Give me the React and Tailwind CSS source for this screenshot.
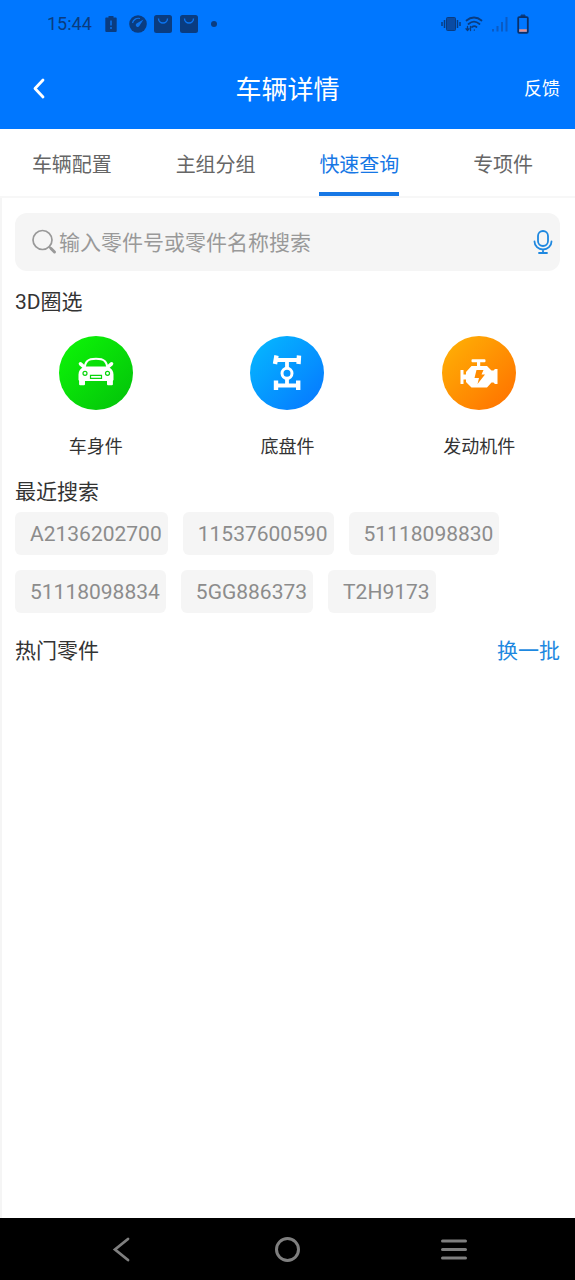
import { useState } from "react";

const tabs = ["车辆配置", "主组分组", "快速查询", "专项件"];

const recentSearches = [
	"A2136202700",
	"11537600590",
	"51118098830",
	"51118098834",
	"5GG886373",
	"T2H9173",
];

function BagIcon() {
	return (
		<svg viewBox="0 0 18 18" className="size-[18px]" aria-hidden="true">
			<rect width="18" height="18" rx="2.5" fill="#0a3c80" />
			<path d="M4.500 3.500a4.500 4.500 0 0 0 9 0" fill="none" stroke="#0b74f0" strokeWidth="1.400" />
		</svg>
	);
}

function StatusBar() {
	return (
		<div className="flex h-12 items-center justify-between pr-[46px] pl-[47px] text-[#0a3c80]">
			<div className="flex items-center">
				<span className="w-[58px] text-lg">15:44</span>
				<svg viewBox="0 0 12 18" className="mr-3 h-[18px] w-3" aria-hidden="true">
					<path d="M3.500 1h5v1.500H11a.7.7 0 0 1 .7.700V16a1 1 0 0 1-1 1H1.300a1 1 0 0 1-1-1V3.200a.7.7 0 0 1 .7-.7h2.500z" fill="#0a3c80" />
					<path d="M6 5.500v5M6 12v2" stroke="#0b74f0" strokeWidth="1.500" />
				</svg>
				<svg viewBox="0 0 18 18" className="mr-[7px] size-[18px]" aria-hidden="true">
					<circle cx="9" cy="9" r="8.800" fill="#0a3c80" />
					<path d="M3.500 8a6 6 0 0 1 7.500-4.500" fill="none" stroke="#0b74f0" strokeWidth="1.200" />
					<path d="M14.500 4.500 10.300 11a1.900 1.900 0 1 1-2.800-2.500z" fill="#0b74f0" />
				</svg>
				<div className="flex gap-2">
					<BagIcon />
					<BagIcon />
				</div>
				<span className="ml-[13px] size-1.5 rounded-full bg-[#0a3c80]" />
			</div>
			<div className="flex items-center">
				<svg viewBox="0 0 20 16" className="mr-1 h-4 w-5" aria-hidden="true">
					<rect x="5.500" y="1.500" width="9" height="13" rx="1" fill="#0a4ba3" stroke="#0a3c80" />
					<path d="M3.500 4v8M16.500 4v8M1 6v4M19 6v4" stroke="#0a3c80" strokeWidth="1.500" />
				</svg>
				<svg viewBox="0 0 18 16" className="mr-2 h-4 w-[18px]" aria-hidden="true" fill="none" stroke="#0a3c80" strokeWidth="1.800" strokeLinecap="round">
					<path d="M1.500 4.500c4.500-4 10.500-4 15 0M3.500 8c3.500-3 7.500-3 11 0M7 11c1.800-1.200 3-1.200 4.500 0" />
					<path d="M9.300 14v.2M2.500 10.500v4M1 12.800l1.500 1.700L4 12.800M5.500 14.500v-4" strokeWidth="1.300" />
				</svg>
				<svg viewBox="0 0 18 16" className="mr-2 h-4 w-[18px]" aria-hidden="true">
					<path d="M2 15.500V13M6.500 15.500V10M11 15.500V6M15.500 15.500V1" stroke="#0a5bc4" strokeWidth="2" />
				</svg>
				<svg viewBox="0 0 12 20" className="h-5 w-3" aria-hidden="true">
					<path d="M4 3V1h4v2" fill="#0a3c80" stroke="#0a3c80" />
					<rect x="1.200" y="3.200" width="9.600" height="15.600" rx="1" fill="none" stroke="#0a3069" strokeWidth="1.800" />
					<path d="M2.200 16.500h7.600" stroke="#e8908a" strokeWidth="2.500" />
				</svg>
			</div>
		</div>
	);
}

function CarIcon() {
	return (
		<svg viewBox="0 0 74 74" className="size-[74px]" aria-hidden="true">
			<defs>
				<linearGradient id="green" x1="0" y1="0" x2="1" y2="1">
					<stop offset="0.1" stopColor="#0cf207" />
					<stop offset="0.9" stopColor="#04c60a" />
				</linearGradient>
			</defs>
			<circle cx="37" cy="37" r="37" fill="url(#green)" />
			<path d="M25.500 32c.8-6.500 3-9.300 11.500-9.300S47.700 25.500 48.500 32" fill="none" stroke="#fff" strokeWidth="2" />
			<path d="M25.500 30.500h23c4 1.500 6 4.500 6 8v5.500l-.6.800v3.400q0 1-1 1h-3.900q-1 0-1-1V45H26v3.200q0 1-1 1h-3.900q-1 0-1-1v-3.400l-.6-.8v-5.500c0-3.500 2-6.500 6-8z" fill="#fff" />
			<path d="M21.500 27.800 24.500 30.500M52.500 27.800 49.500 30.500" stroke="#fff" strokeWidth="3.600" strokeLinecap="round" />
			<g fill="#fff" stroke="#09d60c" strokeWidth="1.200">
				<circle cx="26" cy="37.300" r="2" />
				<circle cx="48.500" cy="37.300" r="2" />
				<path d="M31.500 39.300h11v3h-11z" />
			</g>
		</svg>
	);
}

function ChassisIcon() {
	return (
		<svg viewBox="0 0 74 74" className="size-[74px]" aria-hidden="true">
			<defs>
				<linearGradient id="blue" x1="0" y1="0" x2="1" y2="1">
					<stop offset="0.1" stopColor="#05b4ff" />
					<stop offset="0.9" stopColor="#067cff" />
				</linearGradient>
			</defs>
			<circle cx="37" cy="37" r="37" fill="url(#blue)" />
			<g fill="none" stroke="#fff">
				<path d="M27 24h20M27 49.500h20M37 24v8M37 42v7.500" strokeWidth="3.800" />
				<circle cx="37" cy="37.300" r="5" strokeWidth="3" />
				<path d="M26.500 19.500 25 28M49 19.500 48.500 28" strokeWidth="4.400" />
				<path d="M26 44.500V54M48.200 44.500V54" strokeWidth="4.400" />
			</g>
		</svg>
	);
}

function EngineIcon() {
	return (
		<svg viewBox="0 0 74 74" className="size-[74px]" aria-hidden="true">
			<defs>
				<linearGradient id="orange" x1="0" y1="0" x2="1" y2="1">
					<stop offset="0.1" stopColor="#ffad05" />
					<stop offset="0.9" stopColor="#ff7500" />
				</linearGradient>
			</defs>
			<circle cx="37" cy="37" r="37" fill="url(#orange)" />
			<g fill="#fff">
				<path d="M30.500 23.200h12q1 0 1 1v1q0 1-1 1h-4.300V30H45l4.500 4.500h2L53 33h2.500v15H53l-1.500-1.500h-2L45 51.500H29.500L24 46v-10l5.500-6H35v-3.800h-4.500q-1 0-1-1v-1q0-1 1-1z" />
				<path d="M18.500 34h3v4.500h4v5h-4V48h-3z" />
			</g>
			<path d="M34.500 34h7l-2 4.500h3.500L35.500 48l1.500-6h-4.500z" fill="#ff8b00" />
		</svg>
	);
}

const categories = [
	{ name: "车身件", Icon: CarIcon },
	{ name: "底盘件", Icon: ChassisIcon },
	{ name: "发动机件", Icon: EngineIcon },
];

export default function App() {
	const [activeTab, setActiveTab] = useState("快速查询");
	const [keyword, setKeyword] = useState("");

	return (
		<div className="flex min-h-screen flex-col bg-white font-[Roboto,'Noto_Sans_CJK_SC',sans-serif] text-[#333]">
			<header className="bg-[#0077ff]">
				<StatusBar />
				<div className="grid h-[81px] grid-cols-3 items-center px-[15px] text-white">
					<button type="button" aria-label="返回" className="flex w-12 justify-center">
						<svg viewBox="0 0 14 22" className="h-[22px] w-3.5" aria-hidden="true">
							<path d="M11 2 3 10.500l8 8.500" fill="none" stroke="currentColor" strokeWidth="2.800" strokeLinecap="round" strokeLinejoin="round" />
						</svg>
					</button>
					<h1 className="pt-1 text-center text-[26px]">车辆详情</h1>
					<button type="button" className="justify-self-end text-lg">
						反馈
					</button>
				</div>
			</header>

			<nav className="grid h-[69px] grid-cols-4 border-b-2 border-[#f7f7f7]">
				{tabs.map((tab) => (
					<button
						key={tab}
						type="button"
						onClick={() => setActiveTab(tab)}
						className={`justify-self-center border-b-4 pt-2 text-xl ${
							activeTab === tab
								? "border-[#1677e5] text-[#1677e5]"
								: "border-transparent text-[#666]"
						}`}
					>
						{tab}
					</button>
				))}
			</nav>

			<main className="flex-1 border-l-2 border-[#f5f5f5] pt-[15px] pr-[15px] pl-[13px]">
				<div className="flex h-[58px] items-center rounded-xl bg-[#f5f5f5] pr-[5px] pl-4">
					<svg viewBox="0 0 28 28" className="size-7" aria-hidden="true" fill="none" stroke="#999">
						<circle cx="11.500" cy="12" r="9.500" strokeWidth="1.700" />
						<path d="m18 18.500 2 2" strokeWidth="2" />
						<path d="m20 20.500 3.500 3.500" strokeWidth="3" strokeLinecap="round" />
					</svg>
					<input
						type="text"
						aria-label="搜索零件"
						placeholder="输入零件号或零件名称搜索"
						value={keyword}
						onChange={(e) => setKeyword(e.target.value)}
						className="min-w-0 flex-1 bg-transparent pt-1 text-[21px] outline-none placeholder:text-[#999]"
					/>
					<button type="button" aria-label="语音搜索">
						<svg viewBox="0 0 24 26" className="h-[26px] w-6" aria-hidden="true" fill="none" stroke="#1e88e0" strokeWidth="1.800" strokeLinecap="round">
							<rect x="7" y="2" width="10" height="15" rx="5" />
							<path d="M3.500 12.500a8.500 8 0 0 0 17 0M12 20.500v3.500M8 24h8" />
						</svg>
					</button>
				</div>

				<h2 className="mt-[15px] text-[21px] leading-8">3D圈选</h2>
				<div className="-mr-[15px] -ml-[15px] mt-[18px] grid grid-cols-3">
					{categories.map(({ name, Icon }) => (
						<button key={name} type="button" className="flex flex-col items-center gap-[23px]">
							<Icon />
							<span className="text-lg leading-7">{name}</span>
						</button>
					))}
				</div>

				<h2 className="mt-[15px] text-[21px] leading-8">最近搜索</h2>
				<div className="mt-1 flex flex-wrap gap-[15px]">
					{recentSearches.map((item) => (
						<button
							key={item}
							type="button"
							className="h-[43px] rounded-md bg-[#f5f5f5] pt-0.5 pr-1.5 pl-[15px] text-[21px] text-[#8c8c8c]"
						>
							{item}
						</button>
					))}
				</div>

				<div className="mt-[22px] flex items-center justify-between text-[21px] leading-8">
					<h2>热门零件</h2>
					<button type="button" className="text-[#1e88e0]">
						换一批
					</button>
				</div>
			</main>

			<footer className="grid h-[62px] grid-cols-[1fr_90px_1fr] items-center bg-black text-[#7f7f7f]">
				<button type="button" aria-label="后退" className="justify-self-center">
					<svg viewBox="0 0 18 26" className="h-[26px] w-[18px]" aria-hidden="true">
						<path d="M16 3 3 13.500 16 24" fill="none" stroke="currentColor" strokeWidth="2.800" strokeLinecap="round" />
					</svg>
				</button>
				<button type="button" aria-label="主屏幕" className="size-[25px] justify-self-center rounded-full border-3 border-[#7f7f7f]" />
				<button type="button" aria-label="最近任务" className="justify-self-center">
					<svg viewBox="0 0 26 22" className="h-[22px] w-[26px]" aria-hidden="true">
						<path d="M1.500 3h23M1.500 11.500h23M1.500 20h23" stroke="currentColor" strokeWidth="3" strokeLinecap="round" />
					</svg>
				</button>
			</footer>
		</div>
	);
}
